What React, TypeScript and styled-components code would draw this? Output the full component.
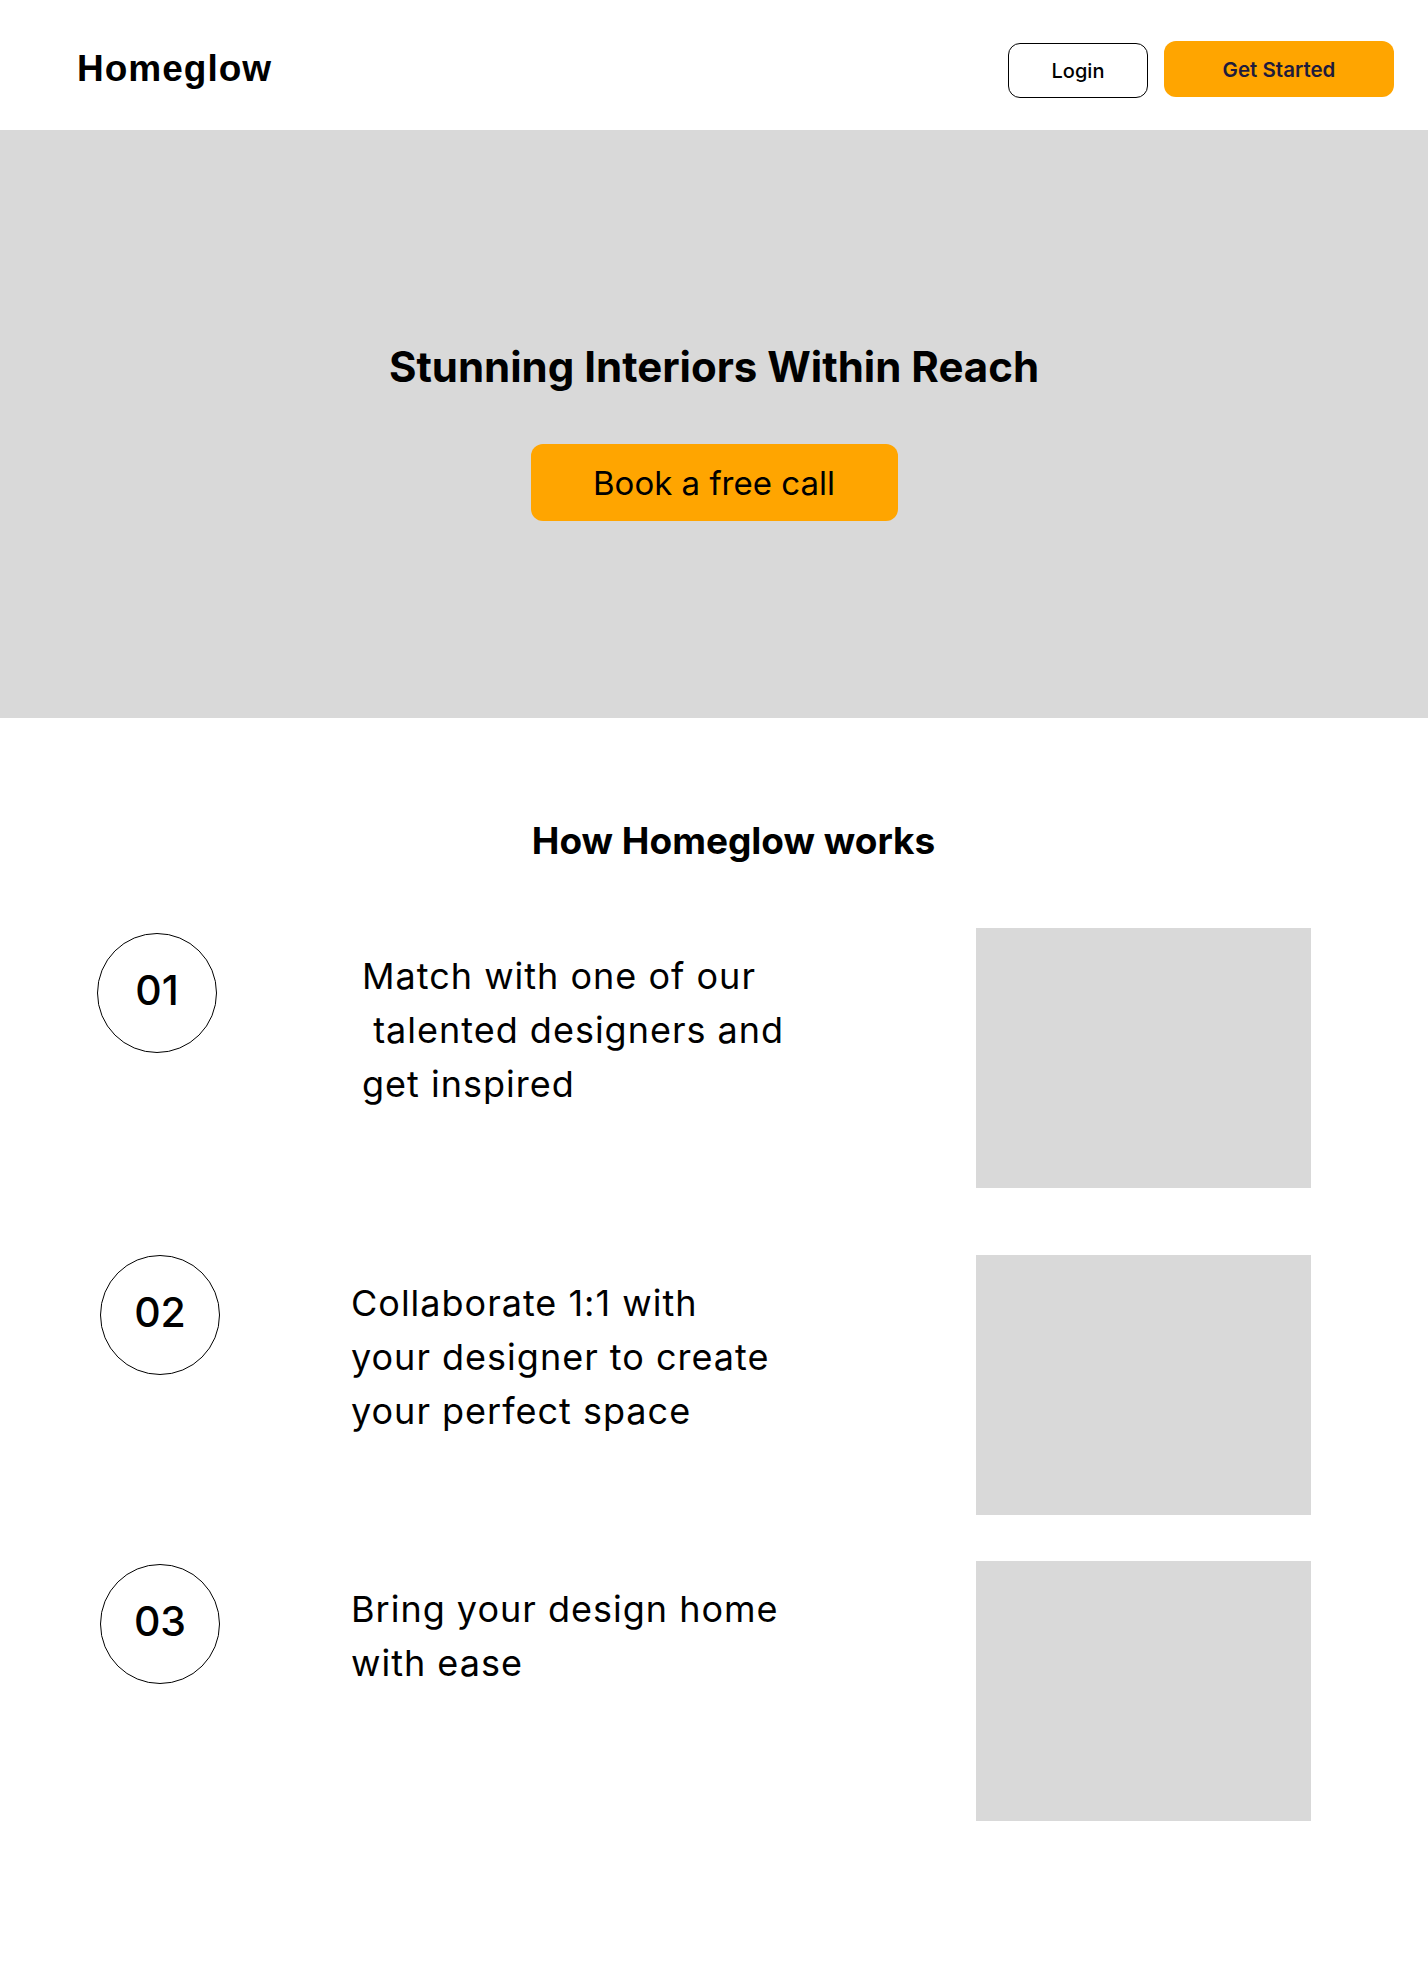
import styled, { createGlobalStyle } from 'styled-components';

const GlobalStyle = createGlobalStyle`
  body {
    margin: 0;
    background: #ffffff;
    font-family: Inter, "Noto Sans", sans-serif;
    color: #000000;
  }
`;

type Step = {
  num: string;
  lines: string[];
  circleTop: number;
  circleLeft: number;
  textGap: number;
  spaceAfter: number;
};

const steps: Step[] = [
  {
    num: '01',
    lines: ['Match with one of our', ' talented designers and', 'get inspired'],
    circleTop: 5,
    circleLeft: 97,
    textGap: 145,
    spaceAfter: 67,
  },
  {
    num: '02',
    lines: ['Collaborate 1:1 with', 'your designer to create', 'your perfect space'],
    circleTop: 0,
    circleLeft: 100,
    textGap: 131,
    spaceAfter: 46,
  },
  {
    num: '03',
    lines: ['Bring your design home', 'with ease'],
    circleTop: 3,
    circleLeft: 100,
    textGap: 131,
    spaceAfter: 0,
  },
];

function App() {
  return (
    <>
      <GlobalStyle />
      <Page>
        <Header>
          <Logo>Homeglow</Logo>
          <Actions>
            <LoginButton>Login</LoginButton>
            <StartButton>Get Started</StartButton>
          </Actions>
        </Header>

        <Hero>
          <HeroTitle>Stunning Interiors Within Reach</HeroTitle>
          <CallButton>Book a free call</CallButton>
        </Hero>

        <Works>
          <WorksTitle>How Homeglow works</WorksTitle>
          <Steps>
            {steps.map((s) => (
              <StepRow key={s.num} $left={s.circleLeft} $after={s.spaceAfter}>
                <Circle $top={s.circleTop}>{s.num}</Circle>
                <StepText $gap={s.textGap}>
                  {s.lines.map((l) => (
                    <Line key={l}>{l}</Line>
                  ))}
                </StepText>
                <Picture />
              </StepRow>
            ))}
          </Steps>
        </Works>
      </Page>
    </>
  );
}

export default App;

const Page = styled.div`
  width: 1428px;
  min-height: 1978px;
  background: #ffffff;
`;

const Header = styled.header`
  height: 130px;
  box-sizing: border-box;
  padding: 8px 34px 0 77px;
  display: flex;
  align-items: center;
  justify-content: space-between;
`;

const Logo = styled.div`
  font-family: "Liberation Sans", Arial, sans-serif;
  font-weight: 700;
  font-size: 37px;
  letter-spacing: 1px;
  color: #000;
`;

const Actions = styled.div`
  display: flex;
  align-items: center;
  gap: 16px;
`;

const LoginButton = styled.button`
  width: 140px;
  height: 55px;
  margin-top: 3px;
  border: 1px solid #000;
  border-radius: 12px;
  background: #fff;
  font-family: Inter, sans-serif;
  font-weight: 500;
  font-size: 20px;
  color: #000;
`;

const StartButton = styled.button`
  width: 230px;
  height: 56px;
  border: none;
  border-radius: 12px;
  background: #ffa500;
  font-family: Inter, sans-serif;
  font-weight: 600;
  font-size: 20.5px;
  color: #1e1b3c;
`;

const Hero = styled.section`
  height: 588px;
  box-sizing: border-box;
  padding-top: 212px;
  background: #d9d9d9;
  display: flex;
  flex-direction: column;
  align-items: center;
`;

const HeroTitle = styled.h1`
  margin: 0;
  font-size: 42px;
  line-height: 1.2;
  font-weight: 700;
`;

const CallButton = styled.button`
  margin-top: 52px;
  width: 367px;
  height: 77px;
  border: none;
  border-radius: 12px;
  background: #ffa500;
  font-family: Inter, sans-serif;
  font-size: 33px;
  font-weight: 400;
  color: #000;
`;

const Works = styled.section`
  padding-top: 101px;
`;

const WorksTitle = styled.h2`
  margin: 0;
  padding-left: 39px;
  text-align: center;
  font-size: 37px;
  line-height: 1.2;
  font-weight: 700;
`;

const Steps = styled.div`
  margin-top: 65px;
  display: flex;
  flex-direction: column;
`;

const StepRow = styled.div<{ $left: number; $after: number }>`
  display: flex;
  align-items: flex-start;
  padding: 0 117px 0 ${(p) => p.$left}px;
  margin-bottom: ${(p) => p.$after}px;
`;

const Circle = styled.div<{ $top: number }>`
  flex: none;
  width: 120px;
  height: 120px;
  margin-top: ${(p) => p.$top}px;
  padding-bottom: 6px;
  box-sizing: border-box;
  border: 1px solid #000;
  border-radius: 50%;
  display: flex;
  align-items: center;
  justify-content: center;
  font-size: 41px;
  font-weight: 500;
`;

const StepText = styled.div<{ $gap: number }>`
  margin-left: ${(p) => p.$gap}px;
  padding-top: 21px;
  font-size: 36px;
  letter-spacing: 1px;
  line-height: 54px;
`;

const Line = styled.div`
  white-space: pre;
`;

const Picture = styled.div`
  flex: none;
  margin-left: auto;
  width: 335px;
  height: 260px;
  background: #d9d9d9;
`;
